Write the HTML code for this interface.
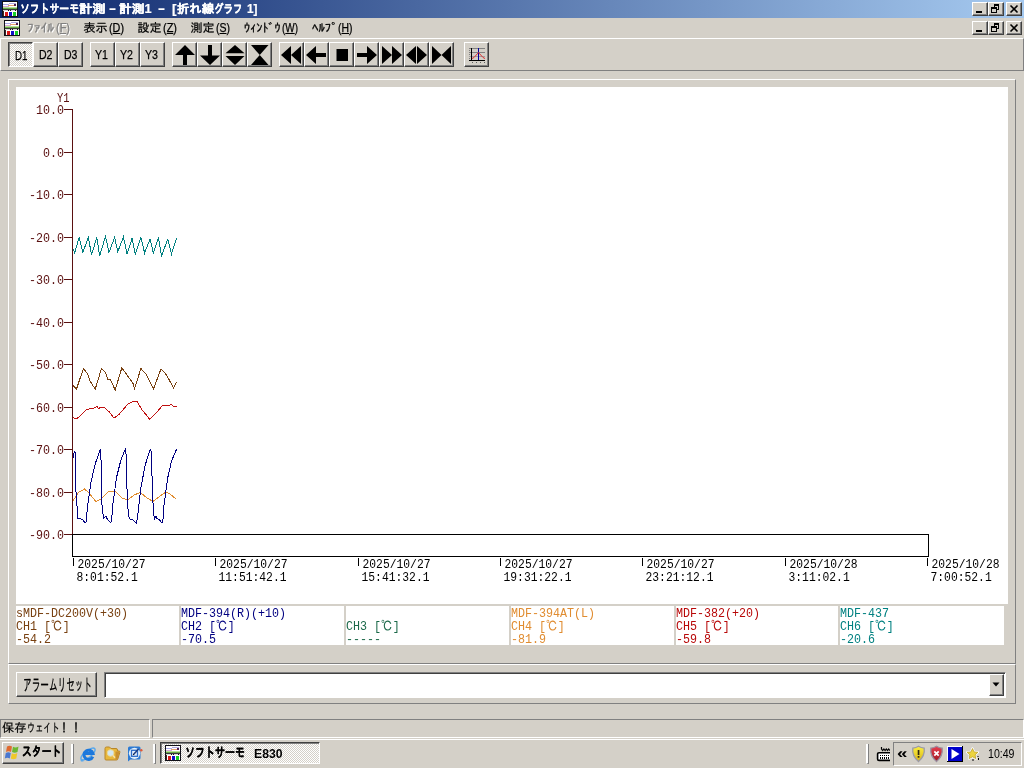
<!DOCTYPE html><html lang="ja"><head><meta charset="utf-8"><title>ソフトサーモ計測</title><style>
*{box-sizing:border-box;margin:0;padding:0}
html,body{width:1024px;height:768px;overflow:hidden;background:#d4d0c8}
body{opacity:.999;position:relative;font-family:"Liberation Sans","IPAGothic",sans-serif;font-size:12px;color:#000;line-height:1}
.a{position:absolute}
.t{position:absolute;white-space:nowrap;-webkit-text-stroke:0.25px currentColor}
.title{left:0;top:0;width:1024px;height:18px;background:linear-gradient(to right,#0a246a 0%,#a6caf0 100%)}
.ttext{left:19px;top:2px;color:#fff;font-weight:bold;font-size:12px;letter-spacing:-0.2px;line-height:14px}
.cb{position:absolute;width:16px;height:14px;background:#d4d0c8;border:1px solid;border-color:#fff #404040 #404040 #fff;box-shadow:inset -1px -1px 0 #808080}
.menu{top:21px;font-size:12px;line-height:14px}
.menu u{text-decoration:underline;text-underline-offset:1px}
.dis{color:#808080;text-shadow:1px 1px 0 #fff}
.tb{position:absolute;top:42px;width:25px;height:25px;background:#d4d0c8;border:1px solid;border-color:#fff #404040 #404040 #fff;box-shadow:inset -1px -1px 0 #808080;text-align:center;font-size:12.5px;line-height:25px}
.tb.on{border-color:#404040 #fff #fff #404040;box-shadow:inset 1px 1px 0 #808080;background:repeating-conic-gradient(#fff 0% 25%,#d4d0c8 0% 50%) 0 0/2px 2px;line-height:27px;padding-left:1px}
.tb svg{position:absolute;left:0;top:0}
.raised{border:1px solid;border-color:#fff #808080 #808080 #fff}
.sunk{border:1px solid;border-color:#808080 #fff #fff #808080}
.ch{position:absolute;top:606px;height:39px;background:#fff;overflow:hidden}
.ch i{font-style:normal;position:relative;top:1px}
.ch div{position:absolute;left:0;white-space:nowrap;font-family:"Liberation Mono","IPAGothic",monospace;font-size:13.5px;line-height:13px;transform:scaleX(0.8642);transform-origin:0 0;letter-spacing:0}
</style></head><body>
<div class="a title"></div>
<svg class="a" style="left:2px;top:1px" width="16" height="16" viewBox="0 0 16 16" shape-rendering="crispEdges"><rect x="0" y="0" width="16" height="16" fill="#101018"/><rect x="1" y="1" width="14" height="7" fill="#fff"/><rect x="1" y="3" width="6" height="1" fill="#a8a8e8"/><rect x="7" y="2" width="7" height="1" fill="#b0a8e0"/><rect x="6" y="4" width="7" height="1" fill="#e8a070"/><rect x="1" y="5" width="6" height="1" fill="#d8a8d8"/><rect x="12" y="3" width="2" height="2" fill="#502050"/><rect x="1" y="6" width="14" height="1" fill="#b8e098"/><rect x="1" y="7" width="14" height="1" fill="#68a848"/><rect x="1" y="8" width="14" height="1" fill="#383838"/><path d="M1 9.5h5m1 0h1m1 0h4m1 0h1" stroke="#d8d8d8" stroke-width="1"/><rect x="1" y="10" width="14" height="5" fill="#fff"/><rect x="1" y="10" width="1" height="5" fill="#402020"/><rect x="3" y="11" width="3" height="4" fill="#d81818"/><rect x="7" y="11" width="3" height="4" fill="#1010c8"/><rect x="11" y="11" width="3" height="4" fill="#18d028"/></svg>
<div class="t" style="left:20px;top:2px;color:#fff;font-weight:bold;font-size:12px;line-height:14px;-webkit-text-stroke:0.2px #fff;transform:scaleX(0.8194);transform-origin:0 0">ソフトサーモ</div>
<div class="t" style="left:79px;top:2px;color:#fff;font-weight:bold;font-size:12px;line-height:14px;-webkit-text-stroke:0.2px #fff;transform:scaleX(1.1042);transform-origin:0 0">計測</div>
<div class="t" style="left:109px;top:2px;color:#fff;font-weight:bold;font-size:12px;line-height:14px;-webkit-text-stroke:0.2px #fff;transform:scaleX(1.7500);transform-origin:0 0">-</div>
<div class="t" style="left:119px;top:2px;color:#fff;font-weight:bold;font-size:12px;line-height:14px;-webkit-text-stroke:0.2px #fff;transform:scaleX(1.0591);transform-origin:0 0">計測1</div>
<div class="t" style="left:158px;top:2px;color:#fff;font-weight:bold;font-size:12px;line-height:14px;-webkit-text-stroke:0.2px #fff;transform:scaleX(1.7500);transform-origin:0 0">-</div>
<div class="t" style="left:172px;top:2px;color:#fff;font-weight:bold;font-size:12px;line-height:14px;-webkit-text-stroke:0.2px #fff;transform:scaleX(1.1250);transform-origin:0 0">[</div>
<div class="t" style="left:176.5px;top:2px;color:#fff;font-weight:bold;font-size:12px;line-height:14px;-webkit-text-stroke:0.2px #fff;transform:scaleX(1.0278);transform-origin:0 0">折れ線</div>
<div class="t" style="left:213.5px;top:2px;color:#fff;font-weight:bold;font-size:12px;line-height:14px;-webkit-text-stroke:0.2px #fff;transform:scaleX(0.7917);transform-origin:0 0">グラフ</div>
<div class="t" style="left:246.5px;top:2px;color:#fff;font-weight:bold;font-size:12px;line-height:14px;-webkit-text-stroke:0.2px #fff;transform:scaleX(0.9839);transform-origin:0 0">1]</div>
<div class="cb" style="left:972px;top:2px"><svg class="a" style="left:0;top:0" width="14" height="12" shape-rendering="crispEdges"><rect x="3" y="8" width="6" height="2" fill="#000"/></svg></div><div class="cb" style="left:988px;top:2px"><svg class="a" style="left:0;top:0" width="14" height="12" shape-rendering="crispEdges"><rect x="5" y="1" width="5" height="2" fill="#000"/><rect x="5" y="1" width="1" height="3" fill="#000"/><rect x="9" y="1" width="1" height="6" fill="#000"/><rect x="8" y="6" width="2" height="1" fill="#000"/><rect x="2" y="4" width="6" height="2" fill="#000"/><rect x="2" y="4" width="1" height="6" fill="#000"/><rect x="7" y="4" width="1" height="6" fill="#000"/><rect x="2" y="9" width="6" height="1" fill="#000"/></svg></div><div class="cb" style="left:1006px;top:2px"><svg class="a" style="left:0;top:0" width="14" height="12"><path d="M3.5 2.5l7 7M10.5 2.5l-7 7" stroke="#000" stroke-width="1.6" fill="none"/></svg></div>
<svg class="a" style="left:4px;top:20px" width="16" height="16" viewBox="0 0 16 16" shape-rendering="crispEdges"><rect x="0" y="0" width="16" height="16" fill="#101018"/><rect x="1" y="1" width="14" height="7" fill="#fff"/><rect x="1" y="3" width="6" height="1" fill="#a8a8e8"/><rect x="7" y="2" width="7" height="1" fill="#b0a8e0"/><rect x="6" y="4" width="7" height="1" fill="#e8a070"/><rect x="1" y="5" width="6" height="1" fill="#d8a8d8"/><rect x="12" y="3" width="2" height="2" fill="#502050"/><rect x="1" y="6" width="14" height="1" fill="#b8e098"/><rect x="1" y="7" width="14" height="1" fill="#68a848"/><rect x="1" y="8" width="14" height="1" fill="#383838"/><path d="M1 9.5h5m1 0h1m1 0h4m1 0h1" stroke="#d8d8d8" stroke-width="1"/><rect x="1" y="10" width="14" height="5" fill="#fff"/><rect x="1" y="10" width="1" height="5" fill="#402020"/><rect x="3" y="11" width="3" height="4" fill="#d81818"/><rect x="7" y="11" width="3" height="4" fill="#1010c8"/><rect x="11" y="11" width="3" height="4" fill="#18d028"/></svg>
<div class="cb" style="left:972px;top:21px"><svg class="a" style="left:0;top:0" width="14" height="12" shape-rendering="crispEdges"><rect x="3" y="8" width="6" height="2" fill="#000"/></svg></div><div class="cb" style="left:988px;top:21px"><svg class="a" style="left:0;top:0" width="14" height="12" shape-rendering="crispEdges"><rect x="5" y="1" width="5" height="2" fill="#000"/><rect x="5" y="1" width="1" height="3" fill="#000"/><rect x="9" y="1" width="1" height="6" fill="#000"/><rect x="8" y="6" width="2" height="1" fill="#000"/><rect x="2" y="4" width="6" height="2" fill="#000"/><rect x="2" y="4" width="1" height="6" fill="#000"/><rect x="7" y="4" width="1" height="6" fill="#000"/><rect x="2" y="9" width="6" height="1" fill="#000"/></svg></div><div class="cb" style="left:1006px;top:21px"><svg class="a" style="left:0;top:0" width="14" height="12"><path d="M3.5 2.5l7 7M10.5 2.5l-7 7" stroke="#000" stroke-width="1.6" fill="none"/></svg></div>
<div class="t menu dis" style="left:27px;top:21px;font-size:12px;line-height:14px;transform:scaleX(1.1250);transform-origin:0 0">ﾌｧｲﾙ</div>
<div class="t menu dis" style="left:55.5px;top:21px;font-size:12px;line-height:14px;transform:scaleX(0.9124);transform-origin:0 0">(<u>F</u>)</div>
<div class="t menu" style="left:83.5px;top:21px;font-size:12px;line-height:14px;transform:scaleX(1.0000);transform-origin:0 0">表示</div>
<div class="t menu" style="left:108.5px;top:21px;font-size:12px;line-height:14px;transform:scaleX(0.8997);transform-origin:0 0">(<u>D</u>)</div>
<div class="t menu" style="left:137.5px;top:21px;font-size:12px;line-height:14px;transform:scaleX(1.0000);transform-origin:0 0">設定</div>
<div class="t menu" style="left:162.5px;top:21px;font-size:12px;line-height:14px;transform:scaleX(0.9124);transform-origin:0 0">(<u>Z</u>)</div>
<div class="t menu" style="left:190.5px;top:21px;font-size:12px;line-height:14px;transform:scaleX(1.0000);transform-origin:0 0">測定</div>
<div class="t menu" style="left:215.5px;top:21px;font-size:12px;line-height:14px;transform:scaleX(0.8741);transform-origin:0 0">(<u>S</u>)</div>
<div class="t menu" style="left:243.5px;top:21px;font-size:12px;line-height:14px;transform:scaleX(1.0139);transform-origin:0 0">ｳｨﾝﾄﾞｳ</div>
<div class="t menu" style="left:281.5px;top:21px;font-size:12px;line-height:14px;transform:scaleX(0.8278);transform-origin:0 0">(<u>W</u>)</div>
<div class="t menu" style="left:312px;top:21px;font-size:12px;line-height:14px;transform:scaleX(1.0625);transform-origin:0 0">ﾍﾙﾌﾟ</div>
<div class="t menu" style="left:338px;top:21px;font-size:12px;line-height:14px;transform:scaleX(0.8697);transform-origin:0 0">(<u>H</u>)</div>
<div class="a" style="left:0;top:38px;width:1024px;height:33px;border:1px solid;border-color:#fff #808080 #808080 #fff"></div>
<div class="tb on" style="left:8px"></div>
<div class="tb" style="left:33px"></div>
<div class="tb" style="left:58px"></div>
<div class="tb" style="left:90px"></div>
<div class="tb" style="left:115px"></div>
<div class="tb" style="left:140px"></div>
<div class="t" style="left:15px;top:48.5px;font-size:12.5px;line-height:14px;transform:scaleX(0.7820);transform-origin:0 0">D1</div>
<div class="t" style="left:39px;top:47.5px;font-size:12.5px;line-height:14px;transform:scaleX(0.8446);transform-origin:0 0">D2</div>
<div class="t" style="left:64px;top:47.5px;font-size:12.5px;line-height:14px;transform:scaleX(0.8446);transform-origin:0 0">D3</div>
<div class="t" style="left:95px;top:47.5px;font-size:12.5px;line-height:14px;transform:scaleX(0.8498);transform-origin:0 0">Y1</div>
<div class="t" style="left:120px;top:47.5px;font-size:12.5px;line-height:14px;transform:scaleX(0.8498);transform-origin:0 0">Y2</div>
<div class="t" style="left:145px;top:47.5px;font-size:12.5px;line-height:14px;transform:scaleX(0.8498);transform-origin:0 0">Y3</div>
<div class="tb" style="left:172px"><svg width="23" height="23" viewBox="0 0 23 23"><path d="M12 2L22 12H14V22H10V12H2Z" fill="#000"/></svg></div>
<div class="tb" style="left:197px"><svg width="23" height="23" viewBox="0 0 23 23"><path d="M12 22L22 12.5H14V2H10V12.5H2Z" fill="#000"/></svg></div>
<div class="tb" style="left:222px"><svg width="23" height="23" viewBox="0 0 23 23"><path d="M12 2L21.5 10.3H2.5Z" fill="#000"/><path d="M12 22L21.5 13H2.5Z" fill="#000"/></svg></div>
<div class="tb" style="left:247px"><svg width="23" height="23" viewBox="0 0 23 23"><path d="M3 2H20.5L11.75 12Z" fill="#000"/><path d="M3 22H20.5L11.75 12Z" fill="#000"/></svg></div>
<div class="tb" style="left:279px"><svg width="23" height="23" viewBox="0 0 23 23"><path d="M1 12L11 3V21Z" fill="#000"/><path d="M11 12L21 3V21Z" fill="#000"/></svg></div>
<div class="tb" style="left:304px"><svg width="23" height="23" viewBox="0 0 23 23"><path d="M1 12L11 3V10H21V14H11V21Z" fill="#000"/></svg></div>
<div class="tb" style="left:329px"><svg width="23" height="23" viewBox="0 0 23 23"><rect x="6.5" y="6" width="11.5" height="12" fill="#000"/></svg></div>
<div class="tb" style="left:354px"><svg width="23" height="23" viewBox="0 0 23 23"><path d="M22 12L12 3V10H2V14H12V21Z" fill="#000"/></svg></div>
<div class="tb" style="left:379px"><svg width="23" height="23" viewBox="0 0 23 23"><path d="M12 12L2 3V21Z" fill="#000"/><path d="M22 12L12 3V21Z" fill="#000"/></svg></div>
<div class="tb" style="left:404px"><svg width="23" height="23" viewBox="0 0 23 23"><path d="M1 12L11 3V21Z" fill="#000"/><path d="M22 12L12 3V21Z" fill="#000"/></svg></div>
<div class="tb" style="left:429px"><svg width="23" height="23" viewBox="0 0 23 23"><path d="M11.5 12L2 3V21Z" fill="#000"/><path d="M11.5 12L21 3V21Z" fill="#000"/></svg></div>
<div class="tb" style="left:464px"><svg width="23" height="23" viewBox="0 0 23 23" shape-rendering="crispEdges"><rect x="4" y="5" width="16" height="1" fill="#808080"/><rect x="4" y="9" width="16" height="1" fill="#808080"/><rect x="4" y="13" width="16" height="1" fill="#a0a0a0"/><rect x="6" y="5" width="1" height="13" fill="#000"/><rect x="4" y="17" width="16" height="1" fill="#000"/><rect x="13" y="5" width="1" height="12" fill="#0000a0"/><path d="M7 15.5L9 14.5L13.5 9.5L18 14.5L20 15.5" fill="none" stroke="#e03030" stroke-width="1" shape-rendering="auto"/><path d="M7 19h1m3 0h1m3 0h1m3 0h1" stroke="#606060" stroke-width="1"/><path d="M4.5 7v1m0 3v1m0 3v1" stroke="#808080" stroke-width="1"/></svg></div>
<div class="a raised" style="left:8px;top:79px;width:1008px;height:585px"></div>
<div class="a" style="left:16px;top:87px;width:992px;height:517px;background:#fff"></div>
<svg class="a" style="left:16px;top:87px" width="992" height="517" viewBox="16 87 992 517" font-family='"Liberation Mono","IPAGothic",monospace' font-size="13.5"><g shape-rendering="crispEdges" stroke="#5a1010" stroke-width="1" fill="none"><path d="M72.5 109V556"/><path d="M64 109.5H72"/><path d="M64 152.5H72"/><path d="M64 194.5H72"/><path d="M64 237.5H72"/><path d="M64 279.5H72"/><path d="M64 322.5H72"/><path d="M64 364.5H72"/><path d="M64 407.5H72"/><path d="M64 449.5H72"/><path d="M64 492.5H72"/><path d="M64 534.5H72"/></g><text x="57" y="102" fill="#5a1010" textLength="12.5" lengthAdjust="spacingAndGlyphs">Y1</text><text x="36" y="114" fill="#5a1010" textLength="28" lengthAdjust="spacingAndGlyphs">10.0</text><text x="43" y="157" fill="#5a1010" textLength="21" lengthAdjust="spacingAndGlyphs">0.0</text><text x="29" y="199" fill="#5a1010" textLength="35" lengthAdjust="spacingAndGlyphs">-10.0</text><text x="29" y="242" fill="#5a1010" textLength="35" lengthAdjust="spacingAndGlyphs">-20.0</text><text x="29" y="284" fill="#5a1010" textLength="35" lengthAdjust="spacingAndGlyphs">-30.0</text><text x="29" y="327" fill="#5a1010" textLength="35" lengthAdjust="spacingAndGlyphs">-40.0</text><text x="29" y="369" fill="#5a1010" textLength="35" lengthAdjust="spacingAndGlyphs">-50.0</text><text x="29" y="412" fill="#5a1010" textLength="35" lengthAdjust="spacingAndGlyphs">-60.0</text><text x="29" y="454" fill="#5a1010" textLength="35" lengthAdjust="spacingAndGlyphs">-70.0</text><text x="29" y="497" fill="#5a1010" textLength="35" lengthAdjust="spacingAndGlyphs">-80.0</text><text x="29" y="539" fill="#5a1010" textLength="35" lengthAdjust="spacingAndGlyphs">-90.0</text><rect x="72.5" y="534.5" width="856" height="22" fill="#fff" stroke="#000" stroke-width="1" shape-rendering="crispEdges"/><g shape-rendering="crispEdges" stroke="#000" stroke-width="1"><path d="M73.5 558V566"/><path d="M215.5 558V566"/><path d="M358.5 558V566"/><path d="M500.5 558V566"/><path d="M642.5 558V566"/><path d="M785.5 558V566"/><path d="M927.5 558V566"/></g><text x="77.5" y="568" fill="#000" textLength="68.0" lengthAdjust="spacingAndGlyphs">2025/10/27</text><text x="76.5" y="581" fill="#000" textLength="61.2" lengthAdjust="spacingAndGlyphs">8:01:52.1</text><text x="219.5" y="568" fill="#000" textLength="68.0" lengthAdjust="spacingAndGlyphs">2025/10/27</text><text x="218.5" y="581" fill="#000" textLength="68.0" lengthAdjust="spacingAndGlyphs">11:51:42.1</text><text x="362.5" y="568" fill="#000" textLength="68.0" lengthAdjust="spacingAndGlyphs">2025/10/27</text><text x="361.5" y="581" fill="#000" textLength="68.0" lengthAdjust="spacingAndGlyphs">15:41:32.1</text><text x="504.5" y="568" fill="#000" textLength="68.0" lengthAdjust="spacingAndGlyphs">2025/10/27</text><text x="503.5" y="581" fill="#000" textLength="68.0" lengthAdjust="spacingAndGlyphs">19:31:22.1</text><text x="646.5" y="568" fill="#000" textLength="68.0" lengthAdjust="spacingAndGlyphs">2025/10/27</text><text x="645.5" y="581" fill="#000" textLength="68.0" lengthAdjust="spacingAndGlyphs">23:21:12.1</text><text x="789.5" y="568" fill="#000" textLength="68.0" lengthAdjust="spacingAndGlyphs">2025/10/28</text><text x="788.5" y="581" fill="#000" textLength="61.2" lengthAdjust="spacingAndGlyphs">3:11:02.1</text><text x="931.5" y="568" fill="#000" textLength="68.0" lengthAdjust="spacingAndGlyphs">2025/10/28</text><text x="930.5" y="581" fill="#000" textLength="61.2" lengthAdjust="spacingAndGlyphs">7:00:52.1</text><polyline points="73.0,500.6 79.0,491.9 84.6,489.0 89.0,493.1 95.9,501.5 101.5,498.8 109.0,491.2 115.2,491.2 122.8,498.8 128.4,499.4 134.0,495.0 140.2,492.5 146.5,497.5 152.8,501.5 159.0,496.9 165.2,492.5 169.0,493.1 176.5,499.4" fill="none" stroke="#e08c30" stroke-width="1" shape-rendering="crispEdges"/><polyline points="73.0,457.5 74.2,451.9 75.5,452.5 75.9,490.0 77.8,518.1 82.8,519.4 84.6,522.5 86.5,521.9 87.1,510.0 90.9,482.5 95.2,463.8 100.2,449.4 101.2,462.5 102.1,510.0 103.8,518.1 105.9,516.2 107.8,520.0 110.2,522.5 111.5,521.9 112.8,505.0 116.5,477.5 120.9,460.0 125.2,449.4 126.5,456.2 127.1,495.0 128.4,515.0 129.6,518.8 132.8,520.0 136.5,523.1 137.8,515.0 140.9,487.5 145.2,465.0 150.2,449.4 151.5,452.5 152.1,480.0 153.4,512.5 154.6,518.8 155.9,516.2 157.1,518.8 159.0,519.4 161.5,522.5 162.8,521.9 164.0,505.0 167.8,477.5 171.5,461.2 176.5,449.4" fill="none" stroke="#000080" stroke-width="1" shape-rendering="crispEdges"/><polyline points="73.0,417.2 75.9,419.1 80.2,416.0 87.1,409.1 92.8,408.8 97.1,406.6 99.0,409.1 100.2,407.2 104.0,407.2 109.0,411.6 114.0,418.2 119.0,414.5 127.8,404.1 132.8,401.6 137.1,401.6 141.5,409.1 149.6,419.1 155.2,414.1 162.1,406.0 171.5,404.8 174.0,406.6 176.5,406.2" fill="none" stroke="#c01010" stroke-width="1" shape-rendering="crispEdges"/><polyline points="73.0,385.4 76.5,389.1 83.4,368.5 87.8,374.1 89.6,380.4 95.2,389.1 101.5,368.5 105.2,372.2 107.8,379.1 110.2,379.1 115.2,390.0 121.8,367.9 132.8,382.9 134.6,388.5 140.9,368.5 146.5,374.8 153.4,389.1 160.9,369.1 166.5,374.8 173.4,387.9 176.5,382.2" fill="none" stroke="#784010" stroke-width="1" shape-rendering="crispEdges"/><polyline points="73.0,248.6 74.6,253.0 79.2,237.4 82.8,252.4 88.4,237.4 91.5,254.9 96.8,237.4 99.6,255.8 105.5,236.5 109.0,252.4 114.6,237.4 117.8,251.8 123.4,237.0 127.1,254.0 132.1,238.2 135.2,254.0 140.9,237.4 144.6,253.0 150.0,239.2 153.4,253.0 158.4,237.4 161.5,255.8 167.8,239.2 171.5,254.0 176.5,238.2" fill="none" stroke="#008080" stroke-width="1" shape-rendering="crispEdges"/></svg>
<div class="ch" style="left:16px;width:163px;color:#784010"><div style="top:1px">sMDF-DC200V(+30)</div><div style="top:14px">CH1 [<i>℃</i>]</div><div style="top:27px">-54.2</div></div>
<div class="ch" style="left:181px;width:163px;color:#000080"><div style="top:1px">MDF-394(R)(+10)</div><div style="top:14px">CH2 [<i>℃</i>]</div><div style="top:27px">-70.5</div></div>
<div class="ch" style="left:346px;width:163px;color:#1a6848"><div style="top:1px"></div><div style="top:14px">CH3 [<i>℃</i>]</div><div style="top:27px">-----</div></div>
<div class="ch" style="left:511px;width:163px;color:#e08c30"><div style="top:1px">MDF-394AT(L)</div><div style="top:14px">CH4 [<i>℃</i>]</div><div style="top:27px">-81.9</div></div>
<div class="ch" style="left:676px;width:162px;color:#b80808"><div style="top:1px">MDF-382(+20)</div><div style="top:14px">CH5 [<i>℃</i>]</div><div style="top:27px">-59.8</div></div>
<div class="ch" style="left:840px;width:164px;color:#008080"><div style="top:1px">MDF-437</div><div style="top:14px">CH6 [<i>℃</i>]</div><div style="top:27px">-20.6</div></div>
<div class="a raised" style="left:8px;top:664px;width:1008px;height:40px"></div>
<div class="a" style="left:16px;top:672px;width:81px;height:25px;background:#d4d0c8;border:1px solid;border-color:#fff #404040 #404040 #fff;box-shadow:inset -1px -1px 0 #808080;"></div>
<div class="t" style="left:23px;top:675.5px;font-size:17px;line-height:19px;transform:scaleX(0.5074);transform-origin:0 0">アラームリセット</div>
<div class="a" style="left:104px;top:672px;width:902px;height:26px;background:#fff;border:1px solid;border-color:#808080 #fff #fff #808080;box-shadow:inset 1px 1px 0 #404040"></div>
<div class="a" style="left:989px;top:674px;width:15px;height:22px;background:#d4d0c8;border:1px solid;border-color:#fff #404040 #404040 #fff;box-shadow:inset -1px -1px 0 #808080"><svg class="a" style="left:0;top:0" width="13" height="20"><path d="M2.5 7.5h7l-3.5 4z" fill="#000"/></svg></div>
<div class="a sunk" style="left:0;top:719px;width:150px;height:19px"></div>
<div class="a sunk" style="left:152px;top:719px;width:872px;height:19px"></div>
<div class="t" style="left:2px;top:721px;font-size:12px;line-height:14px;transform:scaleX(1.0208);transform-origin:0 0">保存</div>
<div class="t" style="left:26.5px;top:721px;font-size:12px;line-height:14px;transform:scaleX(0.6771);transform-origin:0 0">ウェイト</div>
<div class="t" style="left:58px;top:721px;font-size:12px;line-height:14px;transform:scaleX(1.0000);transform-origin:0 0">！！</div>
<div class="a" style="left:0;top:738px;width:1024px;height:30px;background:#d4d0c8;border-top:1px solid #d4d0c8"></div>
<div class="a" style="left:0;top:739px;width:1024px;height:1px;background:#fff"></div>
<div class="a" style="left:2px;top:742px;width:62px;height:22px;background:#d4d0c8;border:1px solid;border-color:#fff #404040 #404040 #fff;box-shadow:inset -1px -1px 0 #808080"></div>
<svg class="a" style="left:3.5px;top:744px" width="17" height="17" viewBox="0 0 17 17"><path d="M3 2.5Q5.5 1 8 2.5L7 8Q4.5 6.5 2 8Z" fill="#e06a30"/><path d="M9 2.8Q11.5 4.2 14.5 2.5L13.5 8Q10.5 9.5 8 8Z" fill="#6cb830"/><path d="M1.8 9Q4.3 7.5 6.8 9L5.8 14.5Q3.3 13 0.8 14.5Z" fill="#4a78d0"/><path d="M7.8 9.2Q10.3 10.7 13.3 9L12.3 14.5Q9.3 16 6.8 14.5Z" fill="#f0c828"/></svg>
<div class="t" style="left:21.5px;top:745px;font-size:13px;font-weight:bold;line-height:14px;-webkit-text-stroke:0.3px #000;transform:scaleX(0.7596);transform-origin:0 0">スタート</div>
<div class="a" style="left:71px;top:744px;width:3px;height:20px;border-left:2px solid #fff;border-right:1px solid #808080;border-bottom:1px solid #808080"></div>
<div class="a" style="left:153px;top:744px;width:3px;height:20px;border-left:2px solid #fff;border-right:1px solid #808080;border-bottom:1px solid #808080"></div>
<div class="a" style="left:866px;top:744px;width:3px;height:20px;border-left:2px solid #fff;border-right:1px solid #808080;border-bottom:1px solid #808080"></div>
<svg class="a" style="left:80px;top:745px" width="17" height="18" viewBox="0 0 17 18"><ellipse cx="8" cy="9" rx="8.6" ry="3.4" transform="rotate(-38 8 9)" fill="none" stroke="#58a8ec" stroke-width="1.4"/><path d="M12.8 11.6A4.6 4.6 0 1 1 13 8.6H5" fill="none" stroke="#1c78dc" stroke-width="3"/><path d="M1.5 14.5Q0.5 16.5 3.5 15.5" fill="none" stroke="#58a8ec" stroke-width="1.4"/></svg>
<svg class="a" style="left:103px;top:745px" width="18" height="17" viewBox="0 0 18 17"><path d="M2 3.5Q2 2 3.5 2H6.5L8 3.5H13Q14.5 3.5 14.5 5V6H16Q17.3 6 16.8 7.5L14.8 14Q14.5 15 13.5 15H3Q2 15 2 14Z" fill="#e8b83c" stroke="#b8862a" stroke-width="1"/><path d="M12.5 6.5H16.5L14.5 14.5H12.5Z" fill="#c89030"/><circle cx="7.6" cy="8" r="3.3" fill="#d4e8f0" stroke="#e8d8a0" stroke-width="1"/><path d="M10 10.5L12 12.8" stroke="#f4e4b0" stroke-width="1.4"/></svg>
<svg class="a" style="left:126px;top:745px" width="18" height="18" viewBox="0 0 18 18"><path d="M2 3Q2 1.5 3.5 1.5H13Q14.5 1.5 14.5 3V13Q14.5 14.5 13 14.5H4.5L2 16.5Z" fill="#2c7ad4"/><circle cx="8.5" cy="8.3" r="5.6" fill="#e4f0fa"/><rect x="5.5" y="5.3" width="6" height="6" fill="none" stroke="#2c6cc8" stroke-width="1.3"/><path d="M7.5 9.5L12.5 4" stroke="#1c3c80" stroke-width="1.5"/><path d="M6.8 10.2l1.4-.4l-1-1z" fill="#000"/><circle cx="15.3" cy="5.3" r="1.2" fill="#e05838"/></svg>
<div class="a" style="left:160px;top:742px;width:160px;height:22px;border:1px solid;border-color:#404040 #fff #fff #404040;box-shadow:inset 1px 1px 0 #808080;background:repeating-conic-gradient(#fff 0% 25%,#d4d0c8 0% 50%) 0 0/2px 2px"></div>
<svg class="a" style="left:165px;top:745px" width="16" height="16" viewBox="0 0 16 16" shape-rendering="crispEdges"><rect x="0" y="0" width="16" height="16" fill="#101018"/><rect x="1" y="1" width="14" height="7" fill="#fff"/><rect x="1" y="3" width="6" height="1" fill="#a8a8e8"/><rect x="7" y="2" width="7" height="1" fill="#b0a8e0"/><rect x="6" y="4" width="7" height="1" fill="#e8a070"/><rect x="1" y="5" width="6" height="1" fill="#d8a8d8"/><rect x="12" y="3" width="2" height="2" fill="#502050"/><rect x="1" y="6" width="14" height="1" fill="#b8e098"/><rect x="1" y="7" width="14" height="1" fill="#68a848"/><rect x="1" y="8" width="14" height="1" fill="#383838"/><path d="M1 9.5h5m1 0h1m1 0h4m1 0h1" stroke="#d8d8d8" stroke-width="1"/><rect x="1" y="10" width="14" height="5" fill="#fff"/><rect x="1" y="10" width="1" height="5" fill="#402020"/><rect x="3" y="11" width="3" height="4" fill="#d81818"/><rect x="7" y="11" width="3" height="4" fill="#1010c8"/><rect x="11" y="11" width="3" height="4" fill="#18d028"/></svg>
<div class="t" style="left:184.5px;top:746px;font-size:13px;font-weight:bold;line-height:14px;-webkit-text-stroke:0.3px #000;transform:scaleX(0.7692);transform-origin:0 0">ソフトサーモ</div>
<div class="t" style="left:254px;top:746.5px;font-size:12.5px;font-weight:bold;line-height:14px;-webkit-text-stroke:0;transform:scaleX(0.9759);transform-origin:0 0">E830</div>
<div class="a sunk" style="left:893px;top:742px;width:129px;height:24px"></div>
<svg class="a" style="left:876px;top:746px" width="14" height="16" viewBox="0 0 14 16"><path d="M5.5 1v2l1.2 1.6l1.2-1.6l1.2 1.6l1.2-1.6l1.2 1.6l1.2-1.6l1.3 1.6" fill="none" stroke="#000" stroke-width="1.2"/><path d="M14 6.8H3Q1.6 6.8 1.6 8.2V13Q1.6 14.4 3 14.4H14" fill="#fff" stroke="#000" stroke-width="1.6"/><g shape-rendering="crispEdges"><rect x="4" y="8.6" width="1" height="1.6" fill="#000"/><rect x="6" y="8.6" width="1" height="1.6" fill="#000"/><rect x="8" y="8.6" width="1" height="1.6" fill="#000"/><rect x="10" y="8.6" width="1" height="1.6" fill="#000"/><rect x="12" y="8.6" width="1" height="1.6" fill="#000"/><rect x="4" y="11" width="1" height="1.6" fill="#000"/><rect x="6" y="11" width="1" height="1.6" fill="#000"/><rect x="8" y="11" width="1" height="1.6" fill="#000"/><rect x="10" y="11" width="1" height="1.6" fill="#000"/><rect x="12" y="11" width="1" height="1.6" fill="#000"/></g></svg>
<div class="t" style="left:897px;top:744.5px;font-size:14px;font-weight:bold;line-height:16px;-webkit-text-stroke:0;transform:scaleX(1.3467);transform-origin:0 0">«</div>
<svg class="a" style="left:911px;top:745px" width="15" height="18" viewBox="0 0 15 18"><defs><linearGradient id="gy" x1="0" y1="0" x2="0" y2="1"><stop offset="0" stop-color="#fcf040"/><stop offset="1" stop-color="#d8b418"/></linearGradient></defs><path d="M7.5 1.2Q10 2.8 13.2 3.2Q14.2 11 7.5 16.6Q0.8 11 1.8 3.2Q5 2.8 7.5 1.2Z" fill="url(#gy)" stroke="#9a9aa8" stroke-width="1.3"/><rect x="6.7" y="5" width="1.7" height="5" fill="#302810"/><rect x="6.7" y="11" width="1.7" height="1.7" fill="#302810"/></svg>
<svg class="a" style="left:929px;top:745px" width="15" height="18" viewBox="0 0 15 18"><defs><linearGradient id="gr" x1="0" y1="0" x2="0" y2="1"><stop offset="0" stop-color="#e84050"/><stop offset="1" stop-color="#a01820"/></linearGradient></defs><path d="M7.5 1.2Q10 2.8 13.2 3.2Q14.2 11 7.5 16.6Q0.8 11 1.8 3.2Q5 2.8 7.5 1.2Z" fill="url(#gr)" stroke="#9a90a0" stroke-width="1.3"/><path d="M5.3 6.3l4.4 4.4M9.7 6.3l-4.4 4.4" stroke="#fff" stroke-width="1.7"/></svg>
<svg class="a" style="left:947px;top:746px" width="16" height="16" viewBox="0 0 16 16" shape-rendering="crispEdges"><rect width="16" height="16" fill="#0000cc"/><rect width="16" height="1" fill="#fff"/><rect width="1" height="16" fill="#fff"/><rect x="15" width="1" height="16" fill="#000"/><rect y="15" width="16" height="1" fill="#000"/><path d="M4.5 3l8 5l-8 5z" fill="#fff" shape-rendering="auto"/></svg>
<svg class="a" style="left:966px;top:747px" width="14" height="14" viewBox="0 0 14 14"><path d="M6.5 1.5l1.6 3.4l3.8.4l-2.8 2.6l.7 3.7l-3.3-1.8l-3.3 1.8l.7-3.7l-2.8-2.6l3.8-.4z" fill="#ecd440" stroke="#fff" stroke-width="2.2" stroke-linejoin="round"/><path d="M6.5 1.5l1.6 3.4l3.8.4l-2.8 2.6l.7 3.7l-3.3-1.8l-3.3 1.8l.7-3.7l-2.8-2.6l3.8-.4z" fill="#ecd440" stroke="#b89820" stroke-width=".7"/><rect x="11.5" y="9" width="1" height="1" fill="#000"/><rect x="12" y="11" width="1" height="2" fill="#000"/><rect x="6" y="12.5" width="2" height="1" fill="#000"/></svg>
<div class="t" style="left:987.5px;top:747px;font-size:12px;line-height:14px;-webkit-text-stroke:0;transform:scaleX(0.8824);transform-origin:0 0">10:49</div>
</body></html>
